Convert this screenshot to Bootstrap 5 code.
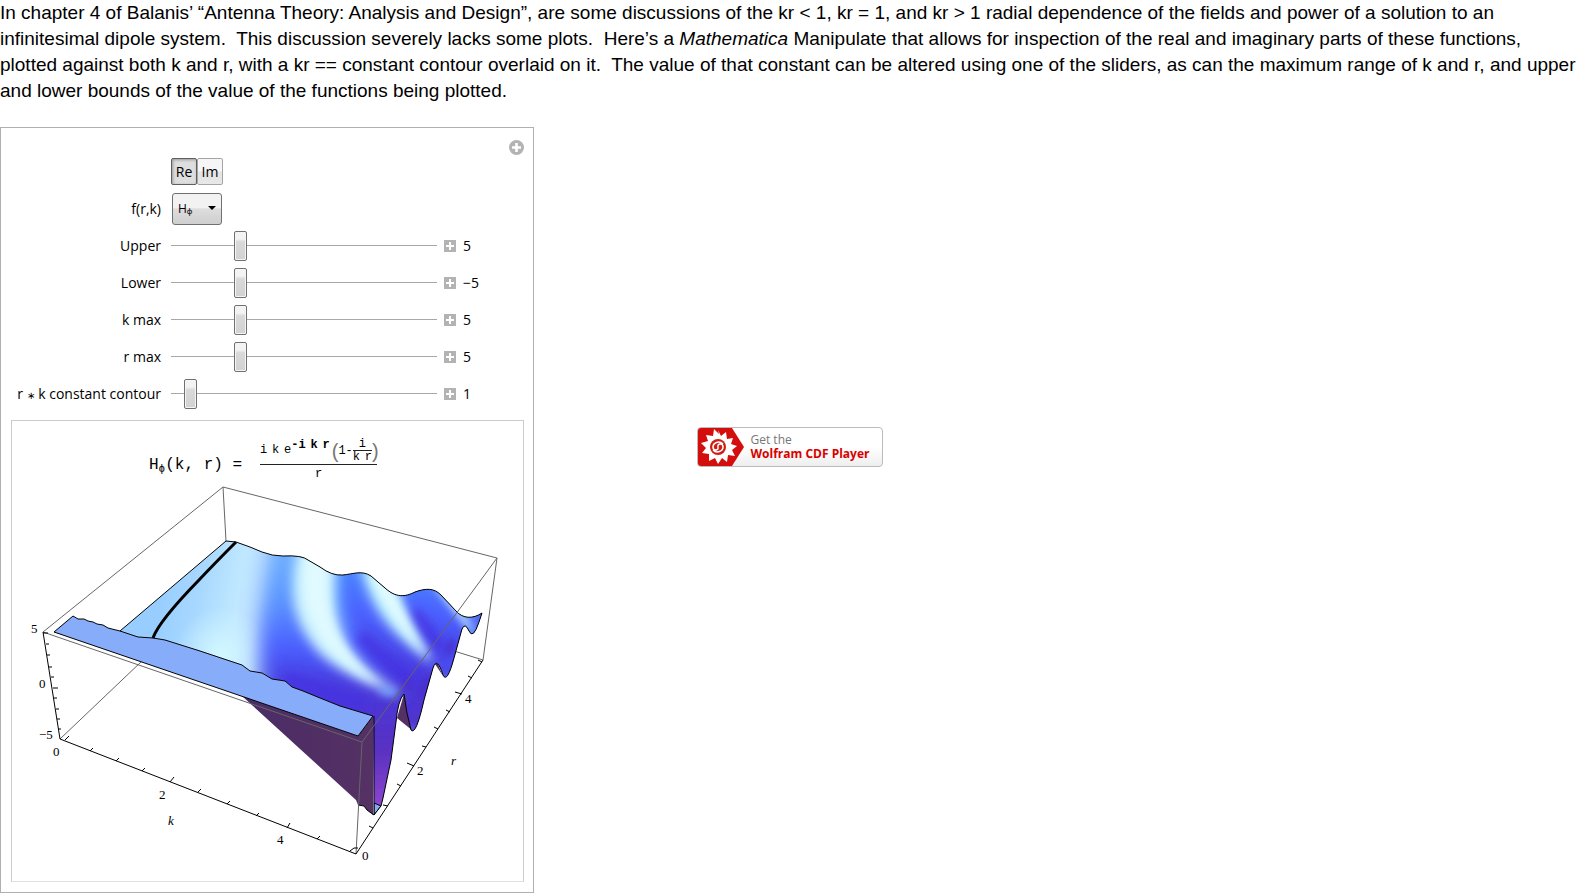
<!DOCTYPE html>
<html lang="en">
<head>
<meta charset="utf-8">
<meta name="viewport" content="width=device-width, initial-scale=1">
<title>Infinitesimal dipole fields</title>
<link href="https://cdn.jsdelivr.net/npm/bootstrap@5.3.0/dist/css/bootstrap.min.css" rel="stylesheet">
<style>
body{font-family:"Liberation Sans",Arial,sans-serif;color:#000;background:#fff}
.intro{font-size:19px;line-height:26px;margin-bottom:23px}
.stage{display:grid;grid-template-columns:minmax(0,1fr) auto minmax(0,1fr);align-items:start}
.panel{width:534px;max-width:100vw;border:1px solid #b0b0b0;padding-bottom:10px;font-family:"Open Sans","Noto Sans",sans-serif;font-size:14px;z-index:1}
.panel-head{height:25px;padding:12px 9px 0 0}
.ctl{height:37px}
.ctl-name{width:160px;margin-right:10px;text-align:right;white-space:nowrap}
.star{font-size:10px}
.plain-btn{border:0;padding:0;background:none;line-height:0;display:block}
.setter{height:27px;width:26px;padding:0;border:1px solid #a5a5a5;border-radius:2px;color:#000;background:linear-gradient(#f6f6f6 0 48%,#e3e3e3 52%,#e8e8e8);font-size:14px;line-height:24px}
.setter.on{border-color:#606060;background:#dedede;box-shadow:inset 1px 1px 3px #999}
.fn-pick{width:50px;height:32px;margin-left:1px;padding:0 0 0 5px;border:1px solid #707070;border-radius:3px;font-size:12px;color:#000;appearance:none;background:url("data:image/svg+xml,%3Csvg xmlns='http://www.w3.org/2000/svg' width='8' height='5'%3E%3Cpath d='M0 0h8L4 4z'/%3E%3C/svg%3E") no-repeat right 5px center,linear-gradient(#f2f2f2 0 45%,#ddd 50%,#cfcfcf)}
.track{appearance:none;width:266px;height:32px;margin:0 7px 0 0;background:linear-gradient(#a8a8a8,#a8a8a8) center/100% 1px no-repeat}
.track::-webkit-slider-thumb{appearance:none;width:13px;height:30px;border:1px solid #707070;border-radius:2px;background:linear-gradient(#f3f3f3 0 25%,#d9d9d9 35%,#d2d2d2);box-shadow:inset 0 0 0 1px #f5f5f5}
.track::-moz-range-thumb{width:11px;height:28px;border:1px solid #707070;border-radius:2px;background:#ddd}
.ctl output{margin-left:7px;padding:0}
.plot-box{margin:8px 9px 0 10px;border:1px solid #ccc;border-bottom-color:#e0e0e0}
.formula{font-family:"Liberation Mono","Courier New",monospace;font-size:16px;height:61px;padding:16px 0 0 137px;white-space:pre}
.formula sub{font-size:11px;bottom:-3px}
.frac-line{border-top:1px solid #222;text-align:center}
.frac{font-size:12px;line-height:18px;margin-left:18px;width:117px}
.frac .num{height:27px;display:flex;align-items:center;white-space:nowrap}
.frac .pw{font-size:12px;line-height:16px;margin-right:2px;align-self:flex-start;font-weight:bold}
.frac .inner{font-size:12px;line-height:12px;text-align:center}
.frac .paren{font-size:20px;font-family:"Liberation Sans",sans-serif;color:#777}
.frac .thin{font-size:8px}
.plot{display:block;width:100%;height:auto}
.plot text{font-family:"Liberation Serif","Times New Roman",serif;font-size:13px}
.cdf{width:186px;height:40px;margin-top:300px;border:1px solid #bbb;border-radius:4px;background:linear-gradient(#fff 50%,#eee);font-family:"Open Sans",sans-serif;font-size:12px;line-height:14px;color:#777;text-decoration:none;overflow:hidden}
.cdf strong{display:block;color:#d90000}
</style>
</head>
<body>
<p class="intro">In chapter 4 of Balanis’ “Antenna Theory: Analysis and Design”, are some discussions of the kr &lt; 1, kr = 1, and kr &gt; 1 radial dependence of the fields and power of a solution to an infinitesimal dipole system.&nbsp; This discussion severely lacks some plots.&nbsp; Here’s a <em>Mathematica</em> Manipulate that allows for inspection of the real and imaginary parts of these functions, plotted against both k and r, with a kr == constant contour overlaid on it.&nbsp; The value of that constant can be altered using one of the sliders, as can the maximum range of k and r, and upper and lower bounds of the value of the functions being plotted.</p>
<main class="stage">
<section class="panel">
  <div class="panel-head d-flex justify-content-end">
    <button class="plain-btn" type="button" aria-label="Options"><svg width="15" height="15" viewBox="0 0 15 15"><circle cx="7.500" cy="7.500" r="7.500" fill="#b3b3b3"/><path d="M7.500 3v9M3 7.500h9" stroke="#fff" stroke-width="2.600"/></svg></button>
  </div>
  <div class="ctl d-flex align-items-center"><span class="ctl-name"></span><button class="setter on" type="button">Re</button><button class="setter" type="button">Im</button></div>
  <div class="ctl d-flex align-items-center"><label class="ctl-name" for="fn">f(r,k)</label><select class="fn-pick" id="fn"><option>Hᵩ</option></select></div>
  <div class="ctl d-flex align-items-center"><label class="ctl-name" for="up">Upper</label><input class="track" id="up" type="range" min="0" max="20" value="5"><button class="plain-btn" type="button" aria-label="Expand"><svg width="12" height="12"><path fill="#b3b3b3" d="M0 0h12v12H0z"/><path d="M6 2v8M2 6h8" stroke="#fff" stroke-width="2"/></svg></button><output for="up">5</output></div>
  <div class="ctl d-flex align-items-center"><label class="ctl-name" for="lo">Lower</label><input class="track" id="lo" type="range" min="-10" max="10" value="-5"><button class="plain-btn" type="button" aria-label="Expand"><svg width="12" height="12"><path fill="#b3b3b3" d="M0 0h12v12H0z"/><path d="M6 2v8M2 6h8" stroke="#fff" stroke-width="2"/></svg></button><output for="lo">−5</output></div>
  <div class="ctl d-flex align-items-center"><label class="ctl-name" for="km">k max</label><input class="track" id="km" type="range" min="0" max="20" value="5"><button class="plain-btn" type="button" aria-label="Expand"><svg width="12" height="12"><path fill="#b3b3b3" d="M0 0h12v12H0z"/><path d="M6 2v8M2 6h8" stroke="#fff" stroke-width="2"/></svg></button><output for="km">5</output></div>
  <div class="ctl d-flex align-items-center"><label class="ctl-name" for="rm">r max</label><input class="track" id="rm" type="range" min="0" max="20" value="5"><button class="plain-btn" type="button" aria-label="Expand"><svg width="12" height="12"><path fill="#b3b3b3" d="M0 0h12v12H0z"/><path d="M6 2v8M2 6h8" stroke="#fff" stroke-width="2"/></svg></button><output for="rm">5</output></div>
  <div class="ctl d-flex align-items-center"><label class="ctl-name" for="rk">r <span class="star">∗</span> k constant contour</label><input class="track" id="rk" type="range" min="0" max="20" value="1"><button class="plain-btn" type="button" aria-label="Expand"><svg width="12" height="12"><path fill="#b3b3b3" d="M0 0h12v12H0z"/><path d="M6 2v8M2 6h8" stroke="#fff" stroke-width="2"/></svg></button><output for="rk">1</output></div>

  <div class="plot-box">
    <div class="formula d-flex"><div class="pt-3">H<sub>ϕ</sub>(k, r) =</div><div class="frac"><div class="num"><span>i<span class="thin"> </span>k<span class="thin"> </span>e</span><span class="pw">-i<span class="thin"> </span>k<span class="thin"> </span>r</span><span class="paren">(</span><span>1-</span><span class="inner"><span class="d-block">i</span><span class="d-block frac-line">k<span class="thin"> </span>r</span></span><span class="paren">)</span></div><div class="frac-line">r</div></div></div>
    <svg class="plot" viewBox="12 482 511 399" role="img" aria-label="Surface plot over k and r">
      <defs>
        <clipPath id="surf"><path d="M120 631L226 541L236 542L250 547L262 552Q272 556 283 556Q302 555 308 560L320 567Q332 576 343 575C353 574 362 570 371 576L385 588C396 598 405 597 415 592C426 588 434 588 441 595L456 611C463 619 473 619 482 613L479 622Q473 640 469 631Q465 622 462 629L454 658Q447 684 443 675Q437 656 433 668L424 700Q416 736 411 730Q406 712 404 694Q398 700 396 722L391 760L383 798L381 806L374 815L373 716L340 706L320 698L303 691L292 687L285 681L272 679L262 673L250 671L242 665L200 651L165 640L153 638L138 637Z"/></clipPath>
        <linearGradient id="base" gradientUnits="userSpaceOnUse" x1="160" y1="605" x2="280" y2="625"><stop offset="0" stop-color="#98ceff"/><stop offset=".3" stop-color="#a8d8ff"/><stop offset=".62" stop-color="#c0e8ff"/><stop offset=".8" stop-color="#bfe0ff"/><stop offset="1" stop-color="#8fc0ff"/></linearGradient>
        <radialGradient id="glow" gradientUnits="userSpaceOnUse" cx="222" cy="655" r="48"><stop offset="0" stop-color="#d2f7ff"/><stop offset="1" stop-color="#d2f7ff" stop-opacity="0"/></radialGradient>
        <linearGradient id="deep" gradientUnits="userSpaceOnUse" x1="0" y1="560" x2="0" y2="815"><stop offset="0" stop-color="#6cacff"/><stop offset=".16" stop-color="#5b95ff"/><stop offset=".34" stop-color="#4b5fff"/><stop offset=".5" stop-color="#4838dc"/><stop offset=".75" stop-color="#5830c0"/><stop offset="1" stop-color="#9448d0"/></linearGradient>
        <linearGradient id="deep2" gradientUnits="userSpaceOnUse" x1="0" y1="570" x2="0" y2="690"><stop offset="0" stop-color="#4a84ff"/><stop offset=".35" stop-color="#4b62ff"/><stop offset="1" stop-color="#4830d8"/></linearGradient>
        <linearGradient id="wall" x1="0" y1="0" x2="1" y2="0"><stop offset="0" stop-color="#4a2c66"/><stop offset="1" stop-color="#553164"/></linearGradient>
        <filter id="b9" x="-30%" y="-30%" width="160%" height="160%"><feGaussianBlur stdDeviation="10"/></filter>
        <filter id="b5" x="-30%" y="-30%" width="160%" height="160%"><feGaussianBlur stdDeviation="6"/></filter>
        <filter id="b3" x="-30%" y="-30%" width="160%" height="160%"><feGaussianBlur stdDeviation="4"/></filter>
      </defs>
      <g fill="none" stroke="#666"><path d="M43 632L223 487L497 558L483 660L454 651M223 487L226 541M60 739L142 661"/></g>
      <path d="M404 694L397 718L413 731ZM437 662L435 664L443 676Z" fill="#553064"/>
      <g clip-path="url(#surf)">
        <path fill="url(#base)" d="M100 520H500V830H100z"/>
        <path fill="url(#glow)" d="M170 600h110v100H170z"/>
        <path filter="url(#b9)" fill="url(#deep)" d="M274 530C262 590 257 640 264 690L373 860H540V530Z"/>
        <path filter="url(#b5)" fill="url(#deep2)" d="M341 560C337 605 350 640 412 692L470 640V540Z"/>
        <path filter="url(#b5)" fill="none" stroke="#4433e2" stroke-width="12" d="M360 635Q374 652 408 678M412 612Q427 628 440 650M285 678L365 706"/>
        <path filter="url(#b5)" fill="#c9f1ff" d="M299 545C287 590 291 625 323 657Q356 683 404 696Q366 672 350 648C332 614 333 590 336 555Z"/>
        <path filter="url(#b3)" fill="#e0faff" d="M307 550C299 592 305 622 334 653Q356 674 384 686Q352 665 336 633Q322 600 330 555Z"/>
        <path filter="url(#b5)" fill="#b5eaff" d="M359 560C369 610 389 633 436 666C418 640 403 613 396 580Z"/>
        <path filter="url(#b3)" fill="#e0fbff" d="M368 570Q384 618 430 659Q408 625 389 577Z"/>
        <path filter="url(#b3)" fill="#c9f0ff" d="M431 582L473 636L470 622L449 590Z"/>
        <path filter="url(#b3)" fill="none" stroke="#78b3ff" stroke-width="6" d="M408 732L415 732M440 681L449 680M467 635L474 636M380 690L404 694"/>
        <path filter="url(#b3)" fill="none" stroke="#4a2cc8" stroke-width="8" d="M409 680L400 702M429 675L420 699M452 640L449 655M480 615L482 620"/>
        <path fill="#84acfb" stroke="#000" d="M374 803L381 806L374 815Z"/>
      </g>
      <path d="M242 696L358 736L373 716V815L367 810L364 806L358 805L356 800Z" fill="url(#wall)"/>
      <path d="M54 632L73 616L78 619L84 619L88 621L93 622L97 624L103 625L108 628L120 631L138 637L153 638L165 640L200 651L242 665L250 671L262 673L272 679L285 681L292 687L303 691L320 698L340 706L373 716L358 736Z" fill="#87adfa" stroke="#000"/>
      <g fill="none" stroke="#000" stroke-linejoin="round">
        <path d="M120 631L226 541L236 542L250 547L262 552Q272 556 283 556Q302 555 308 560L320 567Q332 576 343 575C353 574 362 570 371 576L385 588C396 598 405 597 415 592C426 588 434 588 441 595L456 611C463 619 473 619 482 613L479 622Q473 640 469 631Q465 622 462 629L454 658Q447 684 443 675Q437 656 433 668L424 700Q416 736 411 730Q406 712 404 694Q398 700 396 722L391 760L383 798L381 806L374 815V716M374 815L367 810L364 806L358 805"/>
        <path stroke-width="3" d="M236 542Q215 563 199 580Q159 621 153 638"/>
      </g>
      <path d="M43 632L362 742L356 854M362 742L497 558" fill="none" stroke="#666"/>
      <g fill="none" stroke="#000">
        <path d="M43 632L60 739L356 854L483 660"/>
        <path d="M43 633h5M46 644h3M47 655h3M49 667h3M51 677h3M53 688h5M54 698h3M56 709h3M57 719h3M58 729h3M65 740l4-4M90 751l3-3M116 761l3-3M142 771l3-3M170 782l4-5M198 792l3-3M227 804l3-3M256 816l3-3M287 828l3-5M317 839l3-3M350 851l4-3h4M373 828l-4-2M388 806l-5-1M401 786l-4-2M414 766l-7-3M426 747l-4-1M438 729l-4-2M450 712l-4-2M462 694l-7-2M472 678l-4-2M482 662l-4-2"/>
      </g>
      <g><text x="31" y="633">5</text><text x="39" y="688">0</text><text x="39" y="739">−5</text><text x="53" y="756">0</text><text x="159" y="799">2</text><text x="168" y="825" font-style="italic">k</text><text x="277" y="844">4</text><text x="362" y="860">0</text><text x="417" y="775">2</text><text x="465" y="703">4</text><text x="451" y="765" font-style="italic">r</text></g>
    </svg>
  </div>
</section>
<a class="cdf d-flex align-items-center" href="#"><svg width="53" height="38" viewBox="0 0 53 38"><path d="M0 0H34L46 19L34 38H0Z" fill="#d40d0d"/><path fill="#fff" d="M20 2l3 6 5-4 1 7 6-1-2 6 6 2-5 4 3 6-7-1-1 7-5-4-4 6-3-6-6 3v-7l-7-1 4-5-5-5 7-2-2-6 7 1 1-7 5 5z"/><circle cx="20" cy="19" r="8" fill="#cf1c14"/><path d="M20 19c-1-4 5-4 5 0s-6 7-10 3M20 19c1 4-5 4-5 0s6-7 10-3" fill="none" stroke="#fff" stroke-width="1.500"/></svg><span>Get the<strong>Wolfram CDF Player</strong></span></a>
</main>
<script src="https://cdn.jsdelivr.net/npm/bootstrap@5.3.0/dist/js/bootstrap.bundle.min.js"></script>
</body>
</html>
